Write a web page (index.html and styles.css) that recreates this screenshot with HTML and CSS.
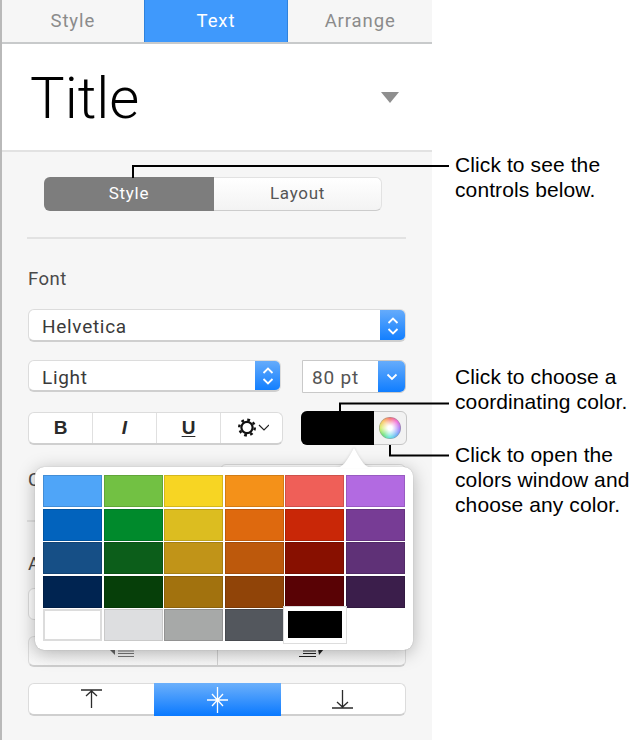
FILE: index.html
```html
<!DOCTYPE html>
<html lang="en">
<head>
<meta charset="utf-8">
<title>Text inspector</title>
<link rel="stylesheet" href="styles.css">
</head>
<body>
<div class="stage">
  <aside class="panel">
    <nav class="tabs">
      <div class="tab">Style</div>
      <div class="tab tab-on">Text</div>
      <div class="tab">Arrange</div>
    </nav>
    <header class="title-row">
      <div class="title">Title</div>
      <div class="title-caret"></div>
    </header>
    <div class="body">
      <div class="seg seg-top">
        <div class="seg-on">Style</div>
        <div class="seg-off">Layout</div>
      </div>
      <div class="rule rule-a"></div>
      <div class="label label-font">Font</div>
      <div class="select select-font">
        <span class="select-text">Helvetica</span>
        <span class="stepper">
          <svg width="14" height="22" viewBox="0 0 14 22"><path d="M2.500 8 7 3.500 11.500 8M2.500 14 7 18.500 11.500 14" fill="none" stroke="#fff" stroke-width="1.800"/></svg>
        </span>
      </div>
      <div class="row row-type">
        <div class="select select-weight">
          <span class="select-text">Light</span>
          <span class="stepper">
            <svg width="14" height="22" viewBox="0 0 14 22"><path d="M2.500 8 7 3.500 11.500 8M2.500 14 7 18.500 11.500 14" fill="none" stroke="#fff" stroke-width="1.800"/></svg>
          </span>
        </div>
        <div class="size">
          <span class="size-text">80 pt</span>
          <span class="size-btn">
            <svg width="14" height="10" viewBox="0 0 14 10"><path d="M2.500 2.500 7 7 11.500 2.500" fill="none" stroke="#fff" stroke-width="1.800"/></svg>
          </span>
        </div>
      </div>
      <div class="row row-format">
        <div class="biu">
          <div class="biu-cell biu-b">B</div>
          <div class="biu-cell biu-i">I</div>
          <div class="biu-cell biu-u">U</div>
          <div class="biu-cell biu-gear">
            <svg width="34" height="20" viewBox="0 0 34 20">
              <circle cx="12" cy="9.500" r="5.600" fill="none" stroke="#111" stroke-width="2.200"/>
              <circle cx="12" cy="9.500" r="7.800" fill="none" stroke="#111" stroke-width="2.400" stroke-dasharray="2.800 3.330"/>
              <path d="M24 7 29 12 34 7" fill="none" stroke="#222" stroke-width="1.200"/>
            </svg>
          </div>
        </div>
        <div class="well">
          <div class="well-color"></div>
          <div class="well-wheel"><div class="wheel"></div></div>
        </div>
      </div>
      <div class="row row-hidden-a">
        <div class="label">C</div>
        <div class="ghost-box"></div>
      </div>
      <div class="rule rule-b"></div>
      <div class="label label-align">A</div>
      <div class="ghost-wide"></div>
      <div class="seg2">
        <div class="seg2-cell">
          <svg width="32" height="12" viewBox="0 0 32 12">
            <path d="M2 0H8V6Z" fill="#666"/>
            <path d="M11 2H27M11 4.500H27M11 7.500H27" fill="none" stroke="#777" stroke-width="1"/>
          </svg>
        </div>
        <div class="seg2-cell">
          <svg width="32" height="12" viewBox="0 0 32 12">
            <path d="M8 2H21M8 4.500H21M4 7.500H21" fill="none" stroke="#222" stroke-width="1.200"/>
            <path d="M23 0H29L24 6Z" fill="#222"/>
          </svg>
        </div>
      </div>
      <div class="valign">
        <div class="valign-cell">
          <svg width="22" height="20" viewBox="0 0 22 20"><path d="M0 1H21M10.500 1V19M5 7 10.500 2 16 7" fill="none" stroke="#2b2b2b" stroke-width="1.300"/></svg>
        </div>
        <div class="valign-cell valign-on">
          <svg width="22" height="26" viewBox="0 0 22 26"><path d="M0 13H21M10.500 0V26M5 7 16 19M16 7 5 19" fill="none" stroke="#fff" stroke-width="1.300"/></svg>
        </div>
        <div class="valign-cell">
          <svg width="22" height="20" viewBox="0 0 22 20"><path d="M0 19H21M10.500 19V1M5 13 10.500 18 16 13" fill="none" stroke="#2b2b2b" stroke-width="1.300"/></svg>
        </div>
      </div>
    </div>
  </aside>

  <div class="popover">
    <svg class="pop-arrow" width="38" height="22" viewBox="0 0 38 22"><path d="M0 22C8 21 10 18 19 2 28 18 30 21 38 22Z" fill="#fff"/></svg>
    <div class="swatches">
      <i class="sw c1"></i><i class="sw c2"></i><i class="sw c3"></i><i class="sw c4"></i><i class="sw c5"></i><i class="sw c6"></i>
      <i class="sw c7"></i><i class="sw c8"></i><i class="sw c9"></i><i class="sw c10"></i><i class="sw c11"></i><i class="sw c12"></i>
      <i class="sw c13"></i><i class="sw c14"></i><i class="sw c15"></i><i class="sw c16"></i><i class="sw c17"></i><i class="sw c18"></i>
      <i class="sw c19"></i><i class="sw c20"></i><i class="sw c21"></i><i class="sw c22"></i><i class="sw c23"></i><i class="sw c24"></i>
      <i class="sw c25"></i><i class="sw c26"></i><i class="sw c27"></i><i class="sw c28"></i><i class="sw sw-picked"></i>
    </div>
  </div>

  <svg class="leaders" width="640" height="740" viewBox="0 0 640 740">
    <path d="M133 178V166H449" />
    <path d="M340 412V403.500H449" />
    <path d="M390 445V455.500H449" />
  </svg>
  <p class="note note-a">Click to see the<br>controls below.</p>
  <p class="note note-b">Click to choose a<br>coordinating color.</p>
  <p class="note note-c">Click to open the<br>colors window and<br>choose any color.</p>
</div>
</body>
</html>
```
FILE: styles.css
```css
* { box-sizing: border-box; }
html, body { margin: 0; padding: 0; background: #fff; }
.stage { position: relative; width: 640px; height: 740px; overflow: hidden; font-family: Inter, "Liberation Sans", sans-serif; }

.panel { width: 432px; height: 740px; background: #f6f6f6; border-left: 2px solid #b9b9b9; display: flex; flex-direction: column; }

.tabs { height: 44px; display: flex; border-bottom: 2px solid #c8cacb; flex: none; }
.tab { width: 142px; text-align: center; font-size: 18.500px; line-height: 42px; color: #8b8b8b; font-weight: 400; letter-spacing: .9px; font-family: Roboto, sans-serif; }
.tab:last-child { width: 144px; }
.tab-on { width: 145px; background: #3f99fc; color: #fff; border-left: 1px solid #2f82dc; border-right: 1px solid #2f82dc; }

.title-row { height: 108px; background: #fff; border-bottom: 2px solid #e2e2e2; display: flex; align-items: center; justify-content: space-between; padding: 0 33px 0 28px; flex: none; }
.title { font-family: Roboto, sans-serif; font-weight: 300; font-size: 58px; line-height: 70px; color: #000; margin-top: 2px; }
.title-caret { width: 0; height: 0; border-left: 9px solid transparent; border-right: 9px solid transparent; border-top: 11px solid #8f8f8f; margin-top: 0; }

.body { padding: 25px 26px 0 26px; display: flex; flex-direction: column; font-family: Roboto, sans-serif; }

.seg { height: 34px; margin: 0 24px 0 16px; display: flex; border-radius: 6px; font-size: 17px; letter-spacing: .7px; flex: none; }
.seg-on { width: 170px; background: #7d7d7d; color: #fff; border-radius: 6px 0 0 6px; text-align: center; line-height: 33px; }
.seg-off { flex: 1; background: linear-gradient(#fff, #f3f3f3); color: #555; border: 1px solid #e2e2e2; border-left: 0; border-bottom-color: #ccc; border-radius: 0 6px 6px 0; text-align: center; line-height: 31px; }

.rule { height: 2px; background: #e2e2e2; flex: none; }
.rule-a { margin-top: 26px; margin-left: -1px; }
.label { font-size: 18.500px; line-height: 22px; color: #4a4a4a; letter-spacing: .5px; }
.label-font { margin-top: 29px; height: 22px; flex: none; }

.select { display: flex; background: #fff; border: 1px solid #dcdcdc; border-bottom: 2px solid #cfcfcf; border-radius: 6px; overflow: hidden; font-size: 19px; color: #3a3a3a; letter-spacing: .7px; flex: none; }
.select-font { height: 33px; margin-top: 19px; width: 378px; }
.select-weight { height: 32px; width: 253px; }
.select-text { flex: 1; padding-left: 13px; line-height: 34px; }
.stepper { width: 26px; margin: -1px -1px -2px 0; background: linear-gradient(#68adfb, #0d7cff); display: flex; align-items: center; justify-content: center; }

.row { display: flex; flex: none; }
.row-type { margin-top: 18px; justify-content: space-between; width: 378px; }
.size { width: 104px; height: 33px; display: flex; background: #fff; border: 1px solid #c9c9c9; border-radius: 0 6px 6px 0; font-size: 19px; color: #555; letter-spacing: .8px; overflow: hidden; }
.size-text { flex: 1; padding-left: 9px; line-height: 34px; }
.size-btn { width: 28px; margin: -1px -1px -1px 0; background: linear-gradient(#68adfb, #0d7cff); display: flex; align-items: center; justify-content: center; }

.row-format { margin-top: 18px; width: 379px; justify-content: space-between; }
.biu { width: 255px; height: 33px; margin-top: 1px; display: flex; background: #fff; border: 1px solid #dcdcdc; border-bottom: 2px solid #cfcfcf; border-radius: 6px; }
.biu-cell { width: 64px; border-right: 1px solid #e0e0e0; display: flex; align-items: center; justify-content: center; font-size: 19px; color: #2a2a2a; font-family: "Liberation Sans", sans-serif; font-weight: 700; }
.biu-cell:last-child { border-right: 0; flex: 1; }
.biu-i { font-style: italic; }
.biu-u { text-decoration: underline; text-underline-offset: 2px; }
.well { width: 106px; height: 34px; display: flex; border: 1px solid #c6c6c6; border-radius: 6px; background: #f2f2f2; }
.well-color { width: 73px; margin: -1px 0 -1px -1px; background: #000; border-radius: 6px 0 0 6px; }
.well-wheel { flex: 1; display: flex; align-items: center; justify-content: center; }
.wheel { width: 22px; height: 22px; border-radius: 50%; background: radial-gradient(circle, #fff 0 14%, rgba(255,255,255,.6) 42%, rgba(255,255,255,0) 80%), conic-gradient(#f5403c, #ee38c8, #8f50f5, #3a90f5, #30d8d8, #3fd850, #c8e83a, #f8b030, #f5403c); box-shadow: inset 0 0 0 .5px #999; }

.row-hidden-a { margin-top: 19px; height: 40px; width: 378px; justify-content: space-between; }
.row-hidden-a .label { padding-top: 5px; }
.ghost-box { width: 186px; height: 30px; background: #fff; border: 1px solid #dcdcdc; border-radius: 6px; }
.rule-b { margin-top: 16px; width: 379px; margin-left: -1px; }
.label-align { margin-top: 31px; flex: none; }
.ghost-wide { height: 32px; margin-top: 13px; width: 378px; background: #fff; border: 1px solid #dcdcdc; border-radius: 6px; flex: none; }
.seg2 { height: 31px; margin-top: 16px; width: 378px; display: flex; background: linear-gradient(#f1f1f1, #f8f8f8); border: 1px solid #dcdcdc; border-bottom: 2px solid #cfcfcf; border-radius: 6px; flex: none; }
.seg2-cell { flex: 1; display: flex; justify-content: center; padding-top: 12px; }
.seg2-cell:first-child { border-right: 1px solid #d2d2d2; }

.valign { height: 33px; margin-top: 16px; width: 378px; display: flex; background: #fff; border: 1px solid #dcdcdc; border-bottom: 2px solid #cfcfcf; border-radius: 6px; flex: none; }
.valign-cell { flex: 1; display: flex; align-items: center; justify-content: center; }
.valign-cell:first-child { flex: none; width: 125px; }
.valign-on { flex: none; width: 127px; margin: -1px 0 -2px; background: linear-gradient(#6cb0fb, #0a79ff); }

.popover { position: absolute; left: 35px; top: 467px; width: 378px; height: 183px; background: #fff; border-radius: 9px; box-shadow: 0 3px 18px rgba(0,0,0,.28), 0 0 1px rgba(0,0,0,.3); padding: 8px; }
.pop-arrow { position: absolute; left: 300px; top: -21px; filter: drop-shadow(0 -1px 1px rgba(0,0,0,.1)); }
.swatches { position: relative; display: grid; grid-template-columns: repeat(6, 59px); grid-auto-rows: 32px; column-gap: 1.600px; row-gap: 1.600px; }
.sw { display: block; border: 1px solid rgba(0,0,0,.14); }
.c1 { background: #4fa5f8; } .c2 { background: #72c143; } .c3 { background: #f7d523; } .c4 { background: #f49119; } .c5 { background: #ef5f58; } .c6 { background: #b26ae1; }
.c7 { background: #0263bd; } .c8 { background: #008a2c; } .c9 { background: #dcbd20; } .c10 { background: #de690e; } .c11 { background: #c92707; } .c12 { background: #773c95; }
.c13 { background: #164f86; } .c14 { background: #0c5e1a; } .c15 { background: #c19418; } .c16 { background: #bd590c; } .c17 { background: #881000; } .c18 { background: #5f3177; }
.c19 { background: #002451; } .c20 { background: #063f09; } .c21 { background: #a2720e; } .c22 { background: #904408; } .c23 { background: #590205; } .c24 { background: #3b1e4b; }
.c25 { background: #fff; border-color: #dcdcdc; border-width: 2px; } .c26 { background: #dddee0; border-color: #c9c9c9; } .c27 { background: #a7a9a8; border-color: #929292; } .c28 { background: #53575d; border-color: #474a4f; }
.sw-picked { position: relative; margin: -2px -2px -2px -1px; height: 36px; background: #000; border: 4px solid #fff; border-bottom-width: 5px; outline: 1px solid #ddd; z-index: 1; }

.leaders { position: absolute; left: 0; top: 0; pointer-events: none; }
.leaders path { fill: none; stroke: #000; stroke-width: 2; }

.note { position: absolute; left: 455px; margin: 0; font-family: "Liberation Sans", sans-serif; font-size: 21px; line-height: 25px; color: #000; white-space: nowrap; letter-spacing: .1px; }
.note-a { top: 152px; }
.note-b { top: 364px; }
.note-c { top: 442px; }
```
